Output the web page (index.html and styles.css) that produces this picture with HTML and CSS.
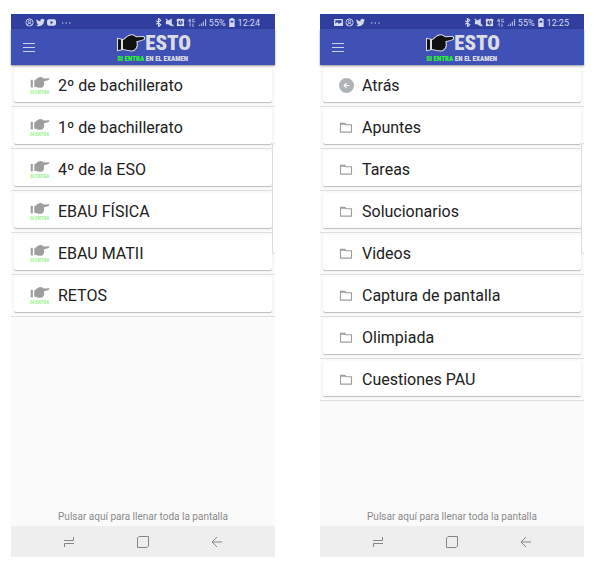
FILE: index.html
```html
<!DOCTYPE html>
<html lang="es">
<head>
    <meta charset="UTF-8">
    <meta name="viewport" content="width=device-width, initial-scale=1.0">
    <title>Esto sí entra en el examen</title>
    <link rel="stylesheet" href="styles.css">
</head>
<body>

<!-- Shared icons -->
<svg class="sprite" aria-hidden="true">
    <symbol id="hand" viewBox="0 0 28 18">
        <path d="M1 5l3 .5v10L1 16zM6 6c2 0 3-3 6-4 2-1 4-1 6 .5l1 .8 7-.3c1.500.2 1.500 2 0 2.400L19 7.500c1 .8 1 1.800.3 2.500 1 .8.8 2-.2 2.500.5 1.200-.3 2.200-1.300 2.300-.3 1.200-1.500 1.700-3 1.700-3 0-5-1-8.800-1.500z"/>
    </symbol>
    <symbol id="user" viewBox="0 0 10 10">
        <g fill="none" stroke="currentColor"><circle cx="5" cy="5" r="4"/><circle cx="5" cy="4" r="1.4"/><path d="M2.7 8c.5-3 4.100-3 4.600 0"/></g>
    </symbol>
    <symbol id="twitter" viewBox="0 0 24 24">
        <path d="M24 4.600a10 10 0 0 1-2.800.8 5 5 0 0 0 2.200-2.700 10 10 0 0 1-3.100 1.200 4.900 4.900 0 0 0-8.400 4.500A14 14 0 0 1 1.700 3.200a4.900 4.900 0 0 0 1.500 6.500 5 5 0 0 1-2.200-.6 4.900 4.900 0 0 0 4 4.900 5 5 0 0 1-2.300.1 4.900 4.900 0 0 0 4.600 3.400A10 10 0 0 1 0 19.500 14 14 0 0 0 21.500 7.100 10 10 0 0 0 24 4.600z"/>
    </symbol>
    <symbol id="youtube" viewBox="0 0 10 10">
        <path fill-rule="evenodd" d="M2 1.500h6q2 0 2 2v3q0 2-2 2h-6q-2 0-2-2v-3q0-2 2-2zM4 3v4l3-2z"/>
    </symbol>
    <symbol id="image" viewBox="0 0 10 10">
        <path fill-rule="evenodd" d="M1 1h8q1 0 1 1v6q0 1-1 1h-8q-1 0-1-1v-6q0-1 1-1zM1.500 2.500v4l2-2 2 2 3-1.500v-2.500z"/>
    </symbol>
    <symbol id="dots" viewBox="0 0 10 10">
        <path d="M0 5h1.500v1.200H0zM4 5h1.500v1.200H4zM8 5h1.500v1.200H8z"/>
    </symbol>
    <symbol id="bluetooth" viewBox="0 0 10 10">
        <path fill="none" stroke="currentColor" stroke-width="1.200" d="M2.500 3l5 4.500L5 9.500v-9l2.500 2-5 4.500"/>
    </symbol>
    <symbol id="mute" viewBox="0 0 10 10">
        <path d="M1 3h2.500L7.500 .5v9L3.500 7H1z"/><path fill="none" stroke="currentColor" stroke-width="1.300" d="M1 1l8.500 8"/>
    </symbol>
    <symbol id="alarm" viewBox="0 0 10 10">
        <path fill-rule="evenodd" d="M.5 2l2-1.500L4 1.200h2L7.500 .5l2 1.500-.6 1.500v3.500l.3 1.500-1 .8-1.400-.5H3.200l-1.400.5-1-.8.3-1.500V3.500zM5 2.800a2.400 2.400 0 1 0 .01 0z"/><path fill="none" stroke="currentColor" stroke-width=".8" d="M5 3v2.500h1.500"/>
    </symbol>
    <symbol id="data" viewBox="0 0 10 10">
        <path fill="none" stroke="currentColor" stroke-width=".8" d="M3.500 5V1l-2 2.500h3M8.500 1.400H6.400v3h2V3.200M3.500 9.500v-3.500l-1 1.200M6.500 6v3.500l1-1.200"/>
    </symbol>
    <symbol id="signal" viewBox="0 0 10 10">
        <path d="M1 7.500h1V9H1zM3.200 6h1v3h-1zM5.400 4h1v5h-1zM8 1h1v8H8z"/>
    </symbol>
    <symbol id="battery" viewBox="0 0 10 10">
        <path fill-rule="evenodd" d="M4 0h3v1h1.500v9h-6V1H4zM4 3v2h3V3z"/>
    </symbol>
    <symbol id="menu" viewBox="0 0 12 10">
        <path d="M0 1h12v1H0zM0 5h12v1H0zM0 9h12v1H0z"/>
    </symbol>
    <symbol id="folder" viewBox="0 0 14 12">
        <path fill="none" stroke="currentColor" stroke-width="1.200" d="M1 1.500h4.500L7 3h6v8H1z"/><path d="M1 1h5l1 2H1z"/>
    </symbol>
    <symbol id="back" viewBox="0 0 16 16">
        <circle cx="8" cy="8" r="8"/><path fill="none" stroke="#fff" stroke-width="1.200" d="M11 8H5.500M8 5.500L5.500 8 8 10.500"/>
    </symbol>
    <symbol id="recents" viewBox="0 0 12 12">
        <path fill="none" stroke="currentColor" d="M1 4.500h9.500V1M11 7.500H1.500V11"/>
    </symbol>
    <symbol id="home" viewBox="0 0 12 12">
        <path fill="none" stroke="currentColor" d="M2 .5h9.500V10L10 11.500H.5V2z"/>
    </symbol>
    <symbol id="arrow" viewBox="0 0 12 12">
        <path fill="none" stroke="currentColor" d="M11 6H1M6 1L1 6l5 5"/>
    </symbol>
</svg>

<main class="screens">
    <section class="phone">
        <div class="status-bar">
            <svg class="icon"><use href="#user"/></svg>
            <svg class="icon"><use href="#twitter"/></svg>
            <svg class="icon"><use href="#youtube"/></svg>
            <svg class="icon more"><use href="#dots"/></svg>
            <div class="status-right">
                <svg class="icon"><use href="#bluetooth"/></svg>
                <svg class="icon"><use href="#mute"/></svg>
                <svg class="icon"><use href="#alarm"/></svg>
                <svg class="icon data"><use href="#data"/></svg>
                <svg class="icon"><use href="#signal"/></svg>
                <span>55%</span>
                <svg class="icon"><use href="#battery"/></svg>
                <span>12:24</span>
            </div>
        </div>
        <header class="app-bar">
            <button class="menu-button" type="button" aria-label="Menú"><svg><use href="#menu"/></svg></button>
            <div class="logo">
                <div class="logo-top"><svg><use href="#hand"/></svg><span>ESTO</span></div>
                <div class="logo-bottom"><span class="green">SI ENTRA</span> EN EL EXAMEN</div>
            </div>
        </header>
        <ul class="list">
            <li><a class="card" href="#"><span class="thumb"><svg><use href="#hand"/></svg><span>SI ENTRA</span></span>2º de bachillerato</a></li>
            <li><a class="card" href="#"><span class="thumb"><svg><use href="#hand"/></svg><span>SI ENTRA</span></span>1º de bachillerato</a></li>
            <li><a class="card" href="#"><span class="thumb"><svg><use href="#hand"/></svg><span>SI ENTRA</span></span>4º de la ESO</a></li>
            <li><a class="card" href="#"><span class="thumb"><svg><use href="#hand"/></svg><span>SI ENTRA</span></span>EBAU FÍSICA</a></li>
            <li><a class="card" href="#"><span class="thumb"><svg><use href="#hand"/></svg><span>SI ENTRA</span></span>EBAU MATII</a></li>
            <li><a class="card" href="#"><span class="thumb"><svg><use href="#hand"/></svg><span>SI ENTRA</span></span>RETOS</a></li>
        </ul>
        <div class="edge-handle"></div>
        <button class="fill-button" type="button">Pulsar aquí para llenar toda la pantalla</button>
        <nav class="nav-bar">
            <button type="button" aria-label="Recientes"><svg><use href="#recents"/></svg></button>
            <button type="button" aria-label="Inicio"><svg><use href="#home"/></svg></button>
            <button type="button" aria-label="Volver"><svg><use href="#arrow"/></svg></button>
        </nav>
    </section>

    <section class="phone">
        <div class="status-bar">
            <svg class="icon"><use href="#image"/></svg>
            <svg class="icon"><use href="#user"/></svg>
            <svg class="icon"><use href="#twitter"/></svg>
            <svg class="icon more"><use href="#dots"/></svg>
            <div class="status-right">
                <svg class="icon"><use href="#bluetooth"/></svg>
                <svg class="icon"><use href="#mute"/></svg>
                <svg class="icon"><use href="#alarm"/></svg>
                <svg class="icon data"><use href="#data"/></svg>
                <svg class="icon"><use href="#signal"/></svg>
                <span>55%</span>
                <svg class="icon"><use href="#battery"/></svg>
                <span>12:25</span>
            </div>
        </div>
        <header class="app-bar">
            <button class="menu-button" type="button" aria-label="Menú"><svg><use href="#menu"/></svg></button>
            <div class="logo">
                <div class="logo-top"><svg><use href="#hand"/></svg><span>ESTO</span></div>
                <div class="logo-bottom"><span class="green">SI ENTRA</span> EN EL EXAMEN</div>
            </div>
        </header>
        <ul class="list">
            <li><a class="card" href="#"><svg class="back"><use href="#back"/></svg>Atrás</a></li>
            <li><a class="card" href="#"><svg class="folder"><use href="#folder"/></svg>Apuntes</a></li>
            <li><a class="card" href="#"><svg class="folder"><use href="#folder"/></svg>Tareas</a></li>
            <li><a class="card" href="#"><svg class="folder"><use href="#folder"/></svg>Solucionarios</a></li>
            <li><a class="card" href="#"><svg class="folder"><use href="#folder"/></svg>Videos</a></li>
            <li><a class="card" href="#"><svg class="folder"><use href="#folder"/></svg>Captura de pantalla</a></li>
            <li><a class="card" href="#"><svg class="folder"><use href="#folder"/></svg>Olimpiada</a></li>
            <li><a class="card" href="#"><svg class="folder"><use href="#folder"/></svg>Cuestiones PAU</a></li>
        </ul>
        <div class="edge-handle"></div>
        <button class="fill-button" type="button">Pulsar aquí para llenar toda la pantalla</button>
        <nav class="nav-bar">
            <button type="button" aria-label="Recientes"><svg><use href="#recents"/></svg></button>
            <button type="button" aria-label="Inicio"><svg><use href="#home"/></svg></button>
            <button type="button" aria-label="Volver"><svg><use href="#arrow"/></svg></button>
        </nav>
    </section>
</main>

</body>
</html>
```

FILE: styles.css
```css
* {
    box-sizing: border-box;
}

body {
    margin: 0;
    background-color: #fff;
    font-family: Roboto, sans-serif;
    color: #212121;
}

button {
    border: none;
    padding: 0;
    background: none;
    color: inherit;
    font-family: inherit;
    cursor: pointer;
}

svg {
    display: block;
    flex: none;
    fill: currentColor;
}

.sprite {
    position: absolute;
    width: 0;
    height: 0;
}

.screens {
    display: grid;
    grid-template-columns: 1fr 1fr;
    gap: 45px;
    min-height: 100vh;
    padding: 14px 14px 14px 11px;
}

.phone {
    position: relative;
    display: flex;
    flex-direction: column;
    background-color: #fafafa;
}

/* Status bar */
.status-bar {
    display: flex;
    align-items: center;
    gap: 2px;
    height: 15px;
    padding: 2px 15px 0 14px;
    background-color: #303f9f;
    color: #d5d9ee;
    font-size: 9px;
}

.icon {
    width: 9px;
    height: 9px;
}

.icon.more {
    margin-left: 4px;
}

.status-right {
    display: flex;
    align-items: center;
    gap: 1px;
    margin-left: auto;
}

.status-right .icon {
    margin-right: 1px;
}

/* App bar */
.app-bar {
    display: flex;
    align-items: center;
    justify-content: space-between;
    height: 36px;
    padding: 0 84px 0 12px;
    background-color: #3f51b5;
    box-shadow: 0 1px 2px rgba(0, 0, 0, 0.4);
    z-index: 1;
}

.menu-button {
    width: 12px;
    height: 10px;
    color: #cdd2ea;
}

.menu-button svg {
    width: 12px;
    height: 10px;
}

.logo {
    color: #dcdce4;
    font-family: "Roboto Condensed", Roboto, sans-serif;
    font-weight: 900;
}

.logo-top {
    display: flex;
    align-items: center;
    height: 24px;
    font-size: 21px;
    line-height: 24px;
}

.logo-top svg {
    width: 28px;
    height: 18px;
    color: #111;
    stroke: #dcdce4;
    stroke-width: 2px;
    paint-order: stroke;
}

.logo-bottom {
    font-size: 7px;
    line-height: 8px;
    white-space: nowrap;
}

.green {
    color: #2bf52b;
}

/* List */
.list {
    flex: 1;
    margin: 0;
    padding: 0;
    list-style: none;
}

.list li {
    height: 42px;
    padding: 2px 3px 4px;
    border-bottom: 1px solid #dfdfdf;
}

.card {
    display: flex;
    align-items: center;
    gap: 8px;
    height: 35px;
    padding: 2px 0 0 16px;
    border-radius: 2px;
    background-color: #fff;
    box-shadow: 0 1px 1px rgba(0, 0, 0, 0.25);
    color: #212121;
    font-size: 16px;
    text-decoration: none;
}

.thumb {
    width: 20px;
    color: #9e9e9e;
    font-family: "Roboto Condensed", Roboto, sans-serif;
    font-size: 5px;
    font-weight: 900;
    line-height: 6px;
    white-space: nowrap;
}

.thumb svg {
    width: 20px;
    height: 13px;
}

.thumb span {
    color: #a5f5a0;
}

.folder {
    width: 14px;
    height: 11px;
    margin-right: 1px;
    color: #9e9e9e;
}

.back {
    width: 15px;
    height: 15px;
    color: #aeb4b6;
}

.edge-handle {
    position: absolute;
    top: 129px;
    right: 0;
    width: 3px;
    height: 111px;
    border: 1px solid #ddd;
    border-right: none;
    border-radius: 3px 0 0 3px;
    background-color: #fff;
}

/* Footer */
.fill-button {
    height: 20px;
    color: #8a8a8a;
    font-size: 10px;
}

.nav-bar {
    display: flex;
    justify-content: center;
    gap: 62px;
    height: 31px;
    background-color: #eee;
    color: #858585;
}

.nav-bar svg {
    width: 12px;
    height: 12px;
}
```
